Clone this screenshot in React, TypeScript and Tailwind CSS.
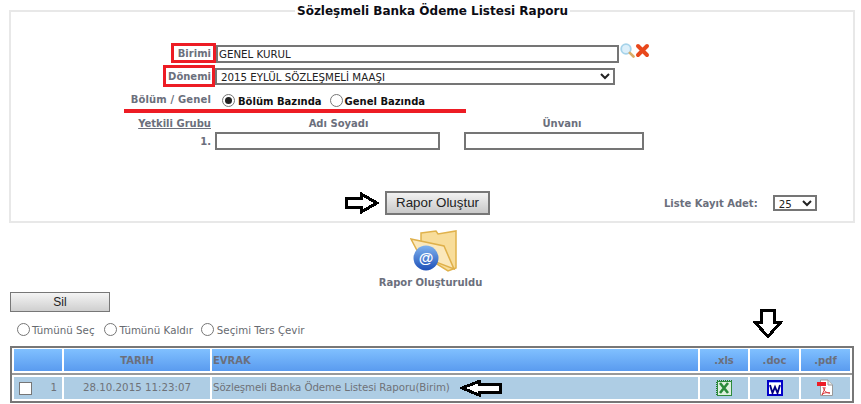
import React from "react";

const font = "font-['DejaVu_Sans',Verdana,sans-serif]";

function Radio({ checked = false }: { checked?: boolean }) {
  return (
    <span className="w-[13px] h-[13px] rounded-full border border-[#767676] bg-white flex items-center justify-center shrink-0">
      {checked && <span className="w-[7px] h-[7px] rounded-full bg-[#222]" />}
    </span>
  );
}

function Hollow({ dir, w, h }: { dir: "right" | "left" | "down"; w: number; h: number }) {
  const paths = {
    right: "M2 6H17V2L32 10.5L17 19V15H2Z",
    left: "M2 8L19 1.5V4.5H40V12.5H19V15Z",
    down: "M8.5 1.5H21.5V13.5H27.5L15 27.5L2 13.5H8.5Z",
  };
  const vb = { right: "0 0 34 21", left: "0 0 42 17", down: "0 0 30 30" };
  return (
    <svg width={w} height={h} viewBox={vb[dir]} className="shrink-0" shapeRendering="crispEdges">
      <path d={paths[dir]} fill="#fff" stroke="#000" strokeWidth="3" strokeLinejoin="miter" />
    </svg>
  );
}

function Cell({ className = "", children }: { className?: string; children?: React.ReactNode }) {
  return <div className={`flex items-center ${className}`}>{children}</div>;
}

const head = "h-[22px] bg-gradient-to-b from-[#80c0ff] to-[#5a9bef] text-[10px] font-bold text-[#6b6f7c]";
const body = "h-[22px] bg-[#aecde4] text-[10.25px] text-[#6e7278]";

export default function App() {
  return (
    <div className={`relative w-[861px] h-[404px] overflow-hidden bg-white ${font}`}>
      <fieldset className="ml-[9px] mt-[1px] w-[846px] h-[222px] border-2 border-[#e8e8e8] px-0 pb-0 pt-0 block">
        <legend className="ml-[284px] px-[2px] text-[12px] leading-[20px] font-bold text-[#0c0c14]">
          Sözleşmeli Banka Ödeme Listesi Raporu
        </legend>

        <div className="mt-[22px] flex items-center h-[20px]">
          <div className="w-[205px] flex justify-end">
            <span className="h-[20px] w-[45px] border-[3px] border-[#ed1c24] text-[10px] font-bold text-[#6b6f7c] flex items-center justify-end pr-[2px]">Birimi</span>
          </div>
          <input
            readOnly
            value="GENEL KURUL"
            className="mt-[1px] h-[18px] w-[403px] border-2 border-[#757575] bg-white pl-[1px] text-[10.25px] text-[#222] outline-none"
          />
          <svg width="15" height="15" viewBox="0 0 15 15" className="-mt-[5px] ml-[1px]">
            <circle cx="6" cy="6" r="4.8" fill="#dceffa" stroke="#a6d3ea" strokeWidth="1.8" />
            <path d="M9.8 9.8L13.5 13.5" stroke="#d9ae68" strokeWidth="2.6" strokeLinecap="round" />
          </svg>
          <svg width="15" height="15" viewBox="0 0 15 15" className="-mt-[5px]">
            <path d="M3 3L12 12M12 3L3 12" stroke="#e8481c" strokeWidth="4" strokeLinecap="round" />
          </svg>
        </div>

        <div className="mt-[2px] flex items-center h-[22px]">
          <div className="w-[204px] flex justify-end">
            <span className="h-[22px] w-[52px] border-[3px] border-[#ed1c24] text-[10px] font-bold text-[#6b6f7c] flex items-center justify-end pr-[1px]">Dönemi</span>
          </div>
          <select className="h-[17px] w-[400px] border-2 border-[#757575] bg-white pl-0 text-[10.25px] text-[#222]">
            <option>2015 EYLÜL SÖZLEŞMELİ MAAŞI</option>
          </select>
        </div>

        <div className="mt-[1px] ml-[113px] w-[342px] h-[25px] pt-[3px] border-b-[4px] border-[#ed1c24] flex items-center">
          <span className="w-[87px] text-right text-[10px] tracking-[0.15px] font-bold text-[#6b6f7c] whitespace-nowrap -mt-[1px] block">Bölüm / Genel</span>
          <div className="ml-[11px] flex items-center text-[10px] font-bold text-[#111] whitespace-nowrap">
            <Radio checked />
            <span className="ml-[3px] mt-[3px]">Bölüm Bazında</span>
            <span className="ml-[8px]"><Radio /></span>
            <span className="ml-[2px] mt-[3px]">Genel Bazında</span>
          </div>
        </div>

        <div className="mt-[2px] flex h-[16px] items-center text-[10px] font-bold text-[#6b6f7c]">
          <span className="w-[200px] text-right underline">Yetkili Grubu</span>
          <span className="ml-[15px] w-[225px] text-center">Adı Soyadı</span>
          <span className="ml-[21px] w-[180px] text-center">Ünvanı</span>
        </div>

        <div className="mt-[1px] flex items-center h-[18px] text-[10px] font-bold text-[#6b6f7c]">
          <span className="w-[200px] text-right">1.</span>
          <input readOnly className="ml-[4px] h-[18px] w-[225px] border-2 border-[#757575] bg-white outline-none" />
          <input readOnly className="ml-[24px] h-[18px] w-[180px] border-2 border-[#757575] bg-white outline-none" />
        </div>

        <div className="mt-[41px] flex items-center h-[24px]">
          <span className="ml-[333px]"><Hollow dir="right" w={35} h={22} /></span>
          <button className="ml-[6px] w-[105px] h-[24px] border-2 border-[#777] bg-gradient-to-b from-[#f2f2f2] to-[#c9c9c9] font-['Liberation_Sans',Arial,sans-serif] text-[13.33px] text-[#222]">
            Rapor Oluştur
          </button>
          <span className="ml-[174px] text-[10px] font-bold text-[#6b6f7c] whitespace-nowrap">Liste Kayıt Adet:</span>
          <select className="ml-[15px] h-[16px] w-[44px] border-2 border-[#757575] bg-white text-[10.25px] text-[#222]">
            <option>25</option>
          </select>
        </div>
      </fieldset>

      <div className="flex flex-col items-center w-[861px] mt-[7px]">
        <svg width="48" height="42" viewBox="0 0 48 42" className="ml-[6px]">
          <defs>
            <linearGradient id="ball" x1="0" y1="0" x2="0" y2="1">
              <stop offset="0" stopColor="#7fb2ee" />
              <stop offset="1" stopColor="#1d4fb8" />
            </linearGradient>
          </defs>
          <path d="M11 3L26 1L28 4L46 1L46 38L38 41L11 24Z" fill="#f8dd9a" stroke="#e0b24c" strokeWidth="1.5" />
          <path d="M1 9L34 16L44 39L10 26Z" fill="#fbe8bb" stroke="#dfb04a" strokeWidth="1.5" />
          <circle cx="16" cy="28" r="12.5" fill="url(#ball)" />
          <text x="16" y="33" textAnchor="middle" fontSize="15" fontWeight="700" fill="#fff" fontFamily="Liberation Sans, sans-serif">@</text>
        </svg>
        <span className="mt-[5px] text-[10px] leading-[12px] font-bold text-[#6b6f7c]">Rapor Oluşturuldu</span>
      </div>

      <button className="ml-[10px] mt-[3px] block w-[100px] h-[20px] border border-[#777] bg-gradient-to-b from-[#f4f4f4] to-[#cfcfcf] font-['Liberation_Sans',Arial,sans-serif] text-[12px] text-[#222]">
        Sil
      </button>

      <div className="ml-[17px] mt-[9px] h-[17px] flex items-center text-[10.25px] text-[#666a70] whitespace-nowrap">
        <Radio /><span className="ml-[2px] mt-[3px]">Tümünü Seç</span>
        <span className="ml-[9px]"><Radio /></span><span className="ml-[3px] mt-[3px]">Tümünü Kaldır</span>
        <span className="ml-[8px]"><Radio /></span><span className="ml-[3px] mt-[3px]">Seçimi Ters Çevir</span>
      </div>

      <div className="absolute left-[753px] top-[309px]">
        <Hollow dir="down" w={30} h={30} />
      </div>

      <div className="ml-[10px] mt-[8px] w-[844px] border-2 border-[#777] border-b-0 bg-white pl-[2px] pr-[2px] pt-[1px]">
        <div className="grid grid-cols-[48px_146px_486px_48px_49px_49px] gap-x-[2px]">
          <Cell className={head} />
          <Cell className={`${head} justify-center`}>TARIH</Cell>
          <Cell className={`${head} pl-[1px]`}>EVRAK</Cell>
          <Cell className={`${head} justify-center`}>.xls</Cell>
          <Cell className={`${head} justify-center`}>.doc</Cell>
          <Cell className={`${head} justify-center`}>.pdf</Cell>
        </div>
        <div className="-mx-[2px] mt-[2px] h-[2px] bg-[#999]" />
        <div className="mt-[2px] grid grid-cols-[48px_146px_486px_48px_49px_49px] gap-x-[2px]">
          <Cell className={body}>
            <span className="ml-[5px] w-[13px] h-[13px] border border-[#767676] bg-white" />
            <span className="ml-auto mr-[5px]">1</span>
          </Cell>
          <Cell className={`${body} justify-center`}>28.10.2015 11:23:07</Cell>
          <Cell className={`${body} pl-[1px]`}>
            <span className="tracking-[-0.09px]">Sözleşmeli Banka Ödeme Listesi Raporu(Birim)</span>
            <span className="ml-[10px]"><Hollow dir="left" w={42} h={17} /></span>
          </Cell>
          <Cell className={`${body} justify-center`}>
            <svg width="16" height="16" viewBox="0 0 16 16" shapeRendering="crispEdges" className="-mt-[1px]">
              <rect x="0.5" y="0.5" width="15" height="15" fill="#dff0df" stroke="#1d7d2a" strokeDasharray="1 1" />
              <rect x="1" y="1" width="14" height="14" fill="none" stroke="#2e8b3c" />
              <path d="M4 3L12 13M12 3L4 13" stroke="#2a8a3a" strokeWidth="2.6" shapeRendering="auto" />
            </svg>
          </Cell>
          <Cell className={`${body} justify-center`}>
            <svg width="16" height="16" viewBox="0 0 16 16" shapeRendering="crispEdges" className="-mt-[1px]">
              <rect x="0" y="0" width="16" height="16" fill="#0000c8" />
              <rect x="2" y="3" width="12" height="11" fill="#fff" />
              <rect x="2" y="2" width="12" height="1" fill="#9fb4ff" />
              <path d="M3 5L5.5 13L8 7L10.5 13L13 5" fill="none" stroke="#000080" strokeWidth="1.9" shapeRendering="auto" />
            </svg>
          </Cell>
          <Cell className={`${body} justify-center`}>
            <svg width="17" height="18" viewBox="0 0 17 18">
              <path d="M3.5 1H11L15.5 6V16.5H3.5Z" fill="#fff" stroke="#9a9a9a" />
              <path d="M11 1V6H15.5" fill="#e8e8e8" stroke="#9a9a9a" />
              <rect x="0" y="3" width="9" height="4" fill="#ee1c25" />
              <path d="M6 8C7 12 9 14 13 14C9 13 6 14 5 16C6 13 8 11 8 8" fill="none" stroke="#d9343a" strokeWidth="1" />
            </svg>
          </Cell>
        </div>
        <div className="-mx-[2px] mt-[2px] h-[2px] bg-[#777]" />
      </div>
    </div>
  );
}
